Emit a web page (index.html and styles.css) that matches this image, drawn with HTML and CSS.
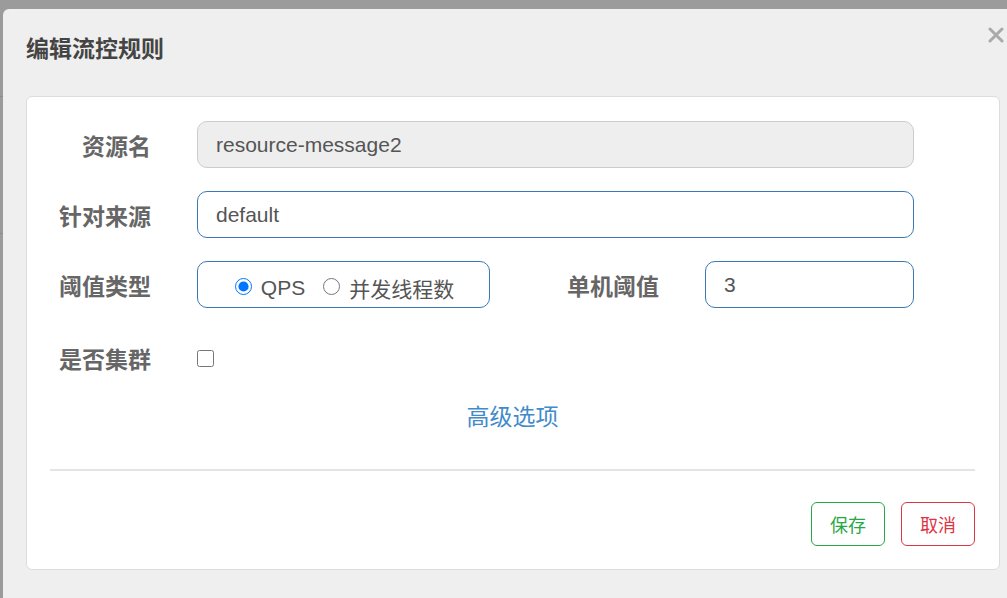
FILE: index.html
```html
<!DOCTYPE html>
<html lang="zh-CN">
<head>
  <meta charset="UTF-8">
  <title>编辑流控规则</title>
  <link rel="stylesheet" href="styles.css">
</head>
<body>
  <div class="modal">
    <button class="close" aria-label="关闭">
      <svg width="16" height="16" viewBox="0 0 16 16"><path d="M2 2 L14 14 M14 2 L2 14" stroke="#a9a9a9" stroke-width="3" stroke-linecap="round"/></svg>
    </button>
    <div class="modal-header">编辑流控规则</div>
    <div class="card">
      <div class="row">
        <label class="label">资源名</label>
        <input class="field wide" type="text" value="resource-message2" disabled>
      </div>
      <div class="row">
        <label class="label">针对来源</label>
        <input class="field wide active" type="text" value="default">
      </div>
      <div class="row">
        <label class="label">阈值类型</label>
        <div class="radio-group">
          <label class="radio"><input type="radio" name="grade" checked> QPS</label>
          <label class="radio"><input type="radio" name="grade"> 并发线程数</label>
        </div>
        <label class="label second">单机阈值</label>
        <input class="field narrow active" type="text" value="3">
      </div>
      <div class="row tall">
        <label class="label">是否集群</label>
        <input class="check" type="checkbox">
      </div>
      <div class="advanced"><a href="#">高级选项</a></div>
      <div class="divider"></div>
      <div class="actions">
        <button class="btn btn-save">保存</button>
        <button class="btn btn-cancel">取消</button>
      </div>
    </div>
  </div>
</body>
</html>
```

FILE: styles.css
```css
* { box-sizing: border-box; margin: 0; padding: 0; }
html, body { height: 100%; overflow: hidden; }
body {
  font-family: "Liberation Sans", Arial, "Noto Sans CJK SC", sans-serif;
  background:
    linear-gradient(#8c8c8c, #8c8c8c) 0 96px / 3px 1px no-repeat,
    linear-gradient(#8c8c8c, #8c8c8c) 0 233px / 3px 1px no-repeat,
    #9b9b9b;
  padding: 9px 0 0 3px;
  color: #555;
}
/* 弹窗 */
.modal {
  position: relative;
  width: 1012px;
  height: 589px;
  background: #efefef;
  border-radius: 6px 6px 0 0;
  padding: 0 0 0 23px;
}
.close {
  position: absolute;
  top: 16px;
  left: 983px;
  background: none;
  border: none;
  width: 20px;
  height: 20px;
  display: flex;
  align-items: center;
  justify-content: center;
  cursor: pointer;
}
.modal-header {
  height: 87px;
  padding-top: 25px;
  font-size: 23px;
  font-weight: bold;
  color: #444;
  line-height: 30px;
}
/* 表单卡片 */
.card {
  width: 974px;
  background: #fff;
  border: 1px solid #dcdcdc;
  border-radius: 6px;
  padding: 24px 24px 23px 23px;
}
.row {
  display: flex;
  align-items: center;
  height: 47px;
  margin-bottom: 23px;
}
.row.tall { height: 54px; margin-bottom: 0; }
.label {
  width: 101px;
  margin-right: 46px;
  text-align: right;
  font-size: 23px;
  font-weight: bold;
  color: #666;
}
.label.second { margin-left: 68px; }
.field {
  height: 47px;
  border: 1px solid #ccc;
  border-radius: 10px;
  padding: 0 18px;
  font-family: inherit;
  font-size: 21px;
  color: #555;
  background: #fff;
  outline: none;
}
.field.wide { width: 717px; }
.field.narrow { width: 209px; }
.field:disabled { background: #eee; color: #555; }
.field.active { border-color: #3a78b6; }
.radio-group {
  width: 293px;
  height: 47px;
  border: 1px solid #3a78b6;
  border-radius: 10px;
  display: flex;
  align-items: center;
  justify-content: center;
  gap: 18px;
  padding: 6px 0 0 2px;
  font-size: 21px;
  color: #555;
}
.radio { display: flex; align-items: center; gap: 9px; }
.radio input { width: 17px; height: 17px; margin: 0 0 3px; }
.check { width: 17px; height: 17px; margin: 0; }
/* 高级选项 */
.advanced {
  text-align: center;
  margin-top: 15px;
  height: 34px;
  line-height: 34px;
}
.advanced a {
  font-size: 23px;
  color: #428bca;
  text-decoration: none;
}
.divider {
  margin-top: 35px;
  height: 2px;
  background: #e4e4e4;
}
/* 底部按钮 */
.actions {
  display: flex;
  justify-content: flex-end;
  gap: 16px;
  margin-top: 31px;
}
.btn {
  width: 74px;
  height: 44px;
  background: #fff;
  border: 1px solid;
  border-radius: 6px;
  font-family: inherit;
  font-size: 18px;
  cursor: pointer;
}
.btn-save { color: #28a745; border-color: #28a745; }
.btn-cancel { color: #dc3545; border-color: #dc3545; }
```
